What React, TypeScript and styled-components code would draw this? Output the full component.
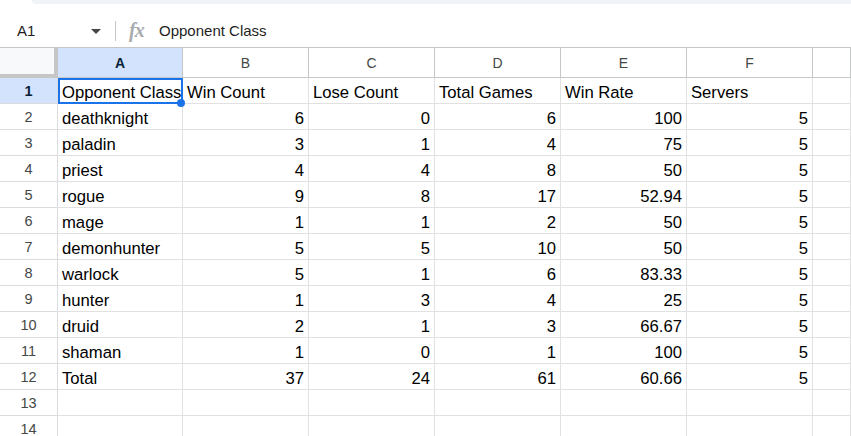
import React from "react";
import styled, { createGlobalStyle, css } from "styled-components";

const GlobalStyle = createGlobalStyle`
  html, body { margin: 0; padding: 0; background: #ffffff; overflow: hidden; }
  body { font-family: "Liberation Sans", Arial, sans-serif; }
  * { box-sizing: border-box; }
`;

const Page = styled.div`
  width: 851px;
  height: 436px;
  display: flex;
  flex-direction: column;
  overflow: hidden;
  background: #ffffff;
  & > * { flex-shrink: 0; }
`;

const TopStrip = styled.div`
  height: 4px;
  margin-left: 32px;
  background: #f0f3f7;
  border-bottom-left-radius: 8px;
`;

const FormulaBar = styled.div`
  height: 44px;
  padding-top: 10px;
  display: flex;
  align-items: center;
  border-bottom: 1px solid #c4c7c5;
`;

const NameBox = styled.div`
  width: 116px;
  height: 20px;
  display: flex;
  align-items: center;
  padding-left: 17px;
  padding-right: 14px;
  font-size: 15px;
  color: #1f1f1f;
  border-right: 1px solid #c4c7c5;
`;

const NameText = styled.span`
  flex: 1;
`;

const Caret = styled.span`
  width: 0;
  height: 0;
  border-left: 5px solid transparent;
  border-right: 5px solid transparent;
  border-top: 5px solid #444746;
  margin-top: 2px;
`;

const Fx = styled.span`
  margin-left: 13px;
  width: 30px;
  font-family: "Liberation Serif", "DejaVu Serif", serif;
  font-style: italic;
  font-weight: bold;
  font-size: 20px;
  color: #a8abae;
  letter-spacing: -1px;
`;

const FormulaText = styled.span`
  font-size: 15px;
  color: #1f1f1f;
`;

const Grid = styled.div`
  display: grid;
  grid-template-columns: 58px 125px repeat(5, 126px) 1fr;
  grid-template-rows: 30px;
  grid-auto-rows: 26px;
`;

const headerBase = css`
  display: flex;
  align-items: center;
  justify-content: center;
  color: #444746;
`;

const Corner = styled.div`
  background: #f8f9fa;
  border-right: 4px solid #c4c7c5;
  border-bottom: 4px solid #c4c7c5;
`;

const ColHeader = styled.div<{ $active?: boolean }>`
  ${headerBase};
  font-size: 14px;
  border-right: 1px solid #c4c7c5;
  border-bottom: 1px solid #c4c7c5;
  background: ${(p) => (p.$active ? "#d3e3fd" : "#ffffff")};
  color: ${(p) => (p.$active ? "#0b1f3a" : "#444746")};
  font-weight: ${(p) => (p.$active ? "bold" : "normal")};
`;

const RowHeader = styled.div<{ $active?: boolean }>`
  ${headerBase};
  font-size: 14.5px;
  border-right: 1px solid #dadce0;
  border-bottom: 1px solid #dadce0;
  background: ${(p) => (p.$active ? "#d3e3fd" : "#ffffff")};
  color: ${(p) => (p.$active ? "#0b1f3a" : "#444746")};
  font-weight: ${(p) => (p.$active ? "bold" : "normal")};
`;

const Cell = styled.div<{ $num?: boolean; $selected?: boolean }>`
  position: relative;
  display: flex;
  align-items: flex-end;
  justify-content: ${(p) => (p.$num ? "flex-end" : "flex-start")};
  padding: 0 4px 1px 4px;
  font-size: 16.67px;
  line-height: 19px;
  color: #000000;
  white-space: nowrap;
  border-right: 1px solid #e1e1e1;
  border-bottom: 1px solid #e1e1e1;
  overflow: ${(p) => (p.$selected ? "visible" : "hidden")};
  ${(p) =>
    p.$selected &&
    css`
      &::before {
        content: "";
        position: absolute;
        left: 0;
        top: 0;
        right: -1px;
        bottom: -1px;
        border: 2px solid #1a73e8;
        pointer-events: none;
      }
      &::after {
        content: "";
        position: absolute;
        right: -3px;
        bottom: -4px;
        width: 8px;
        height: 8px;
        border-radius: 50%;
        background: #1a73e8;
        z-index: 2;
      }
    `}
`;

const CellText = styled.span`
  position: relative;
  z-index: 1;
`;

type Row = [string, number, number, number, number, number];

const headers = ["Opponent Class", "Win Count", "Lose Count", "Total Games", "Win Rate", "Servers"];

const rows: Row[] = [
  ["deathknight", 6, 0, 6, 100, 5],
  ["paladin", 3, 1, 4, 75, 5],
  ["priest", 4, 4, 8, 50, 5],
  ["rogue", 9, 8, 17, 52.94, 5],
  ["mage", 1, 1, 2, 50, 5],
  ["demonhunter", 5, 5, 10, 50, 5],
  ["warlock", 5, 1, 6, 83.33, 5],
  ["hunter", 1, 3, 4, 25, 5],
  ["druid", 2, 1, 3, 66.67, 5],
  ["shaman", 1, 0, 1, 100, 5],
  ["Total", 37, 24, 61, 60.66, 5],
];

const letters = ["A", "B", "C", "D", "E", "F", ""];

export default function App() {
  return (
    <Page>
      <GlobalStyle />
      <TopStrip />
      <FormulaBar>
        <NameBox>
          <NameText>A1</NameText>
          <Caret />
        </NameBox>
        <Fx>fx</Fx>
        <FormulaText>Opponent Class</FormulaText>
      </FormulaBar>
      <Grid>
        <Corner />
        {letters.map((l, i) => (
          <ColHeader key={"h" + i} $active={i === 0}>
            {l}
          </ColHeader>
        ))}

        <RowHeader $active>1</RowHeader>
        {headers.map((h, i) => (
          <Cell key={"r1" + i} $selected={i === 0}>
            <CellText>{h}</CellText>
          </Cell>
        ))}
        <Cell />

        {rows.map((r, ri) => (
          <React.Fragment key={"row" + ri}>
            <RowHeader>{ri + 2}</RowHeader>
            <Cell>{r[0]}</Cell>
            {r.slice(1).map((v, ci) => (
              <Cell key={ci} $num>
                {v}
              </Cell>
            ))}
            <Cell />
          </React.Fragment>
        ))}

        {[13, 14].map((n) => (
          <React.Fragment key={"e" + n}>
            <RowHeader>{n}</RowHeader>
            {letters.map((_, i) => (
              <Cell key={i} />
            ))}
          </React.Fragment>
        ))}
      </Grid>
    </Page>
  );
}
